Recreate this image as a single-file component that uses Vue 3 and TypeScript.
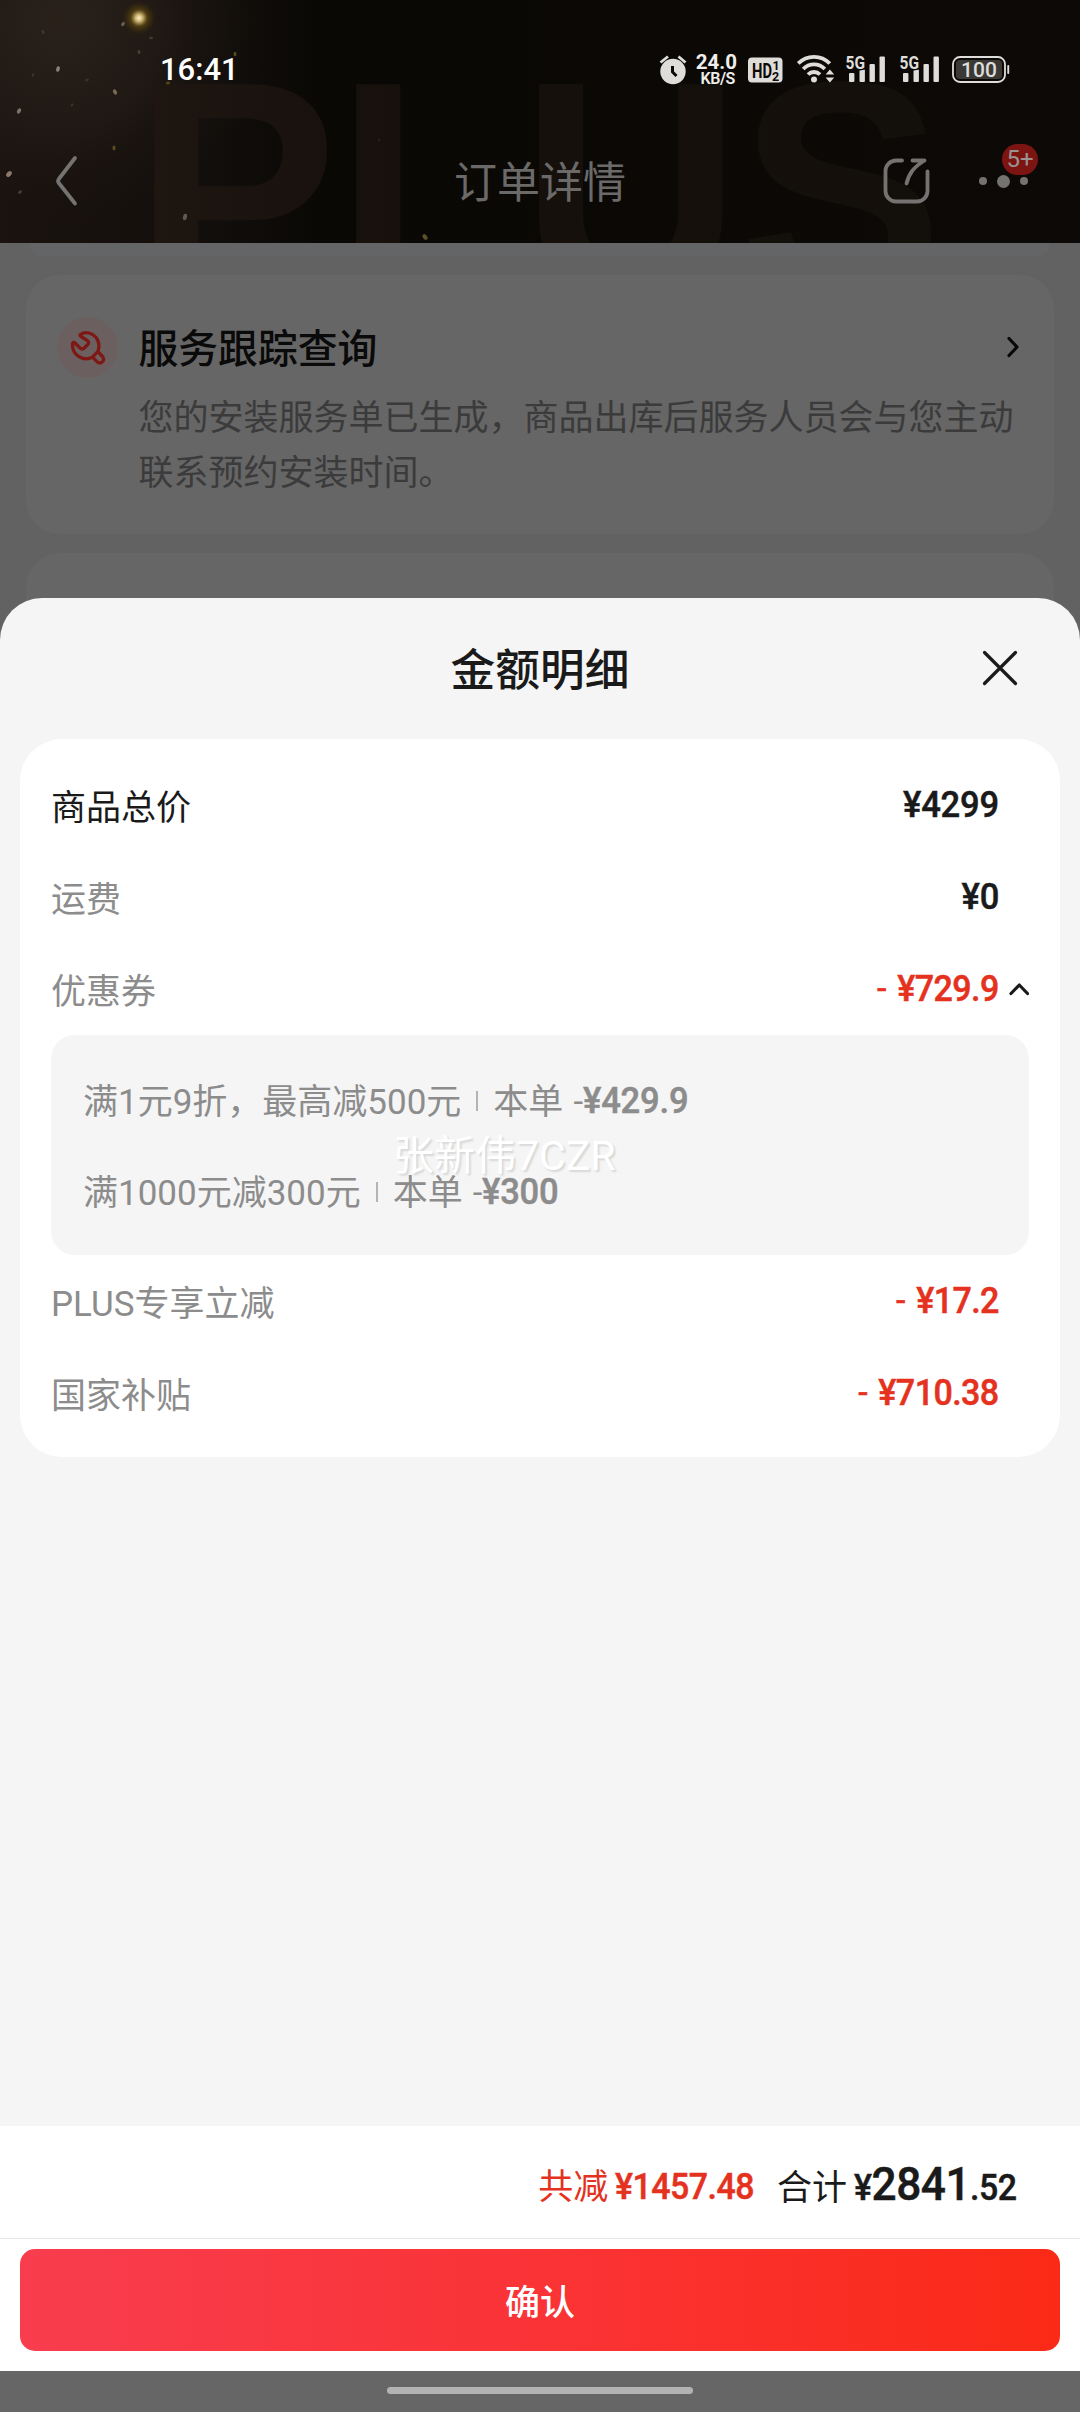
<script setup lang="ts">
interface Coupon {
  rule: string
  amount: string
}
interface Speck {
  x: number
  y: number
  r: number
  c: string
  a: number
}

const coupons: Coupon[] = [
  { rule: '满1元9折，最高减500元', amount: '¥429.9' },
  { rule: '满1000元减300元', amount: '¥300' },
]

const discounts = [
  { label: 'PLUS专享立减', amount: '¥17.2' },
  { label: '国家补贴', amount: '¥710.38' },
]

const specks: Speck[] = [
  { x: 123, y: 24, r: 2.4, c: '#6a5f58', a: 30 },
  { x: 43, y: 32, r: 2, c: '#40382f', a: -30 },
  { x: 139, y: 52, r: 2, c: '#4a4234', a: -20 },
  { x: 58, y: 69, r: 2.8, c: '#8a8078', a: 15 },
  { x: 87, y: 80, r: 2, c: '#3c3029', a: 70 },
  { x: 19, y: 111, r: 2.8, c: '#7c746c', a: 30 },
  { x: 115, y: 92, r: 2.8, c: '#7a6a58', a: -30 },
  { x: 33, y: 75, r: 1.8, c: '#40352e', a: 0 },
  { x: 72, y: 105, r: 1.8, c: '#3c3028', a: 40 },
  { x: 114, y: 148, r: 2.4, c: '#5a4c20', a: 0 },
  { x: 9, y: 174, r: 3.4, c: '#8c7a68', a: 40 },
  { x: 20, y: 192, r: 2.2, c: '#4a3a34', a: 60 },
  { x: 185, y: 217, r: 3.2, c: '#625850', a: 10 },
  { x: 235, y: 54, r: 2.2, c: '#5a4a1c', a: 0 },
  { x: 168, y: 83, r: 2.2, c: '#54421c', a: 80 },
  { x: 425, y: 237, r: 3.2, c: '#5c5028', a: -35 },
  { x: 379, y: 140, r: 1.6, c: '#2c2418', a: 0 },
  { x: 151, y: 38, r: 2, c: '#403a2c', a: -80 },
]
const bars = [
  { x: 3, y: 17, h: 9 },
  { x: 13.5, y: 13.5, h: 12.5 },
  { x: 23.5, y: 8, h: 18 },
  { x: 33.5, y: 0.5, h: 25.5 },
]
</script>

<template>
  <main class="screen">
    <header class="top">
      <svg class="sky" width="1080" height="243" viewBox="0 0 1080 243">
        <defs>
          <linearGradient id="base" x1="0" x2="1" y1="0" y2="0">
            <stop offset="0" stop-color="#1a130f" />
            <stop offset="0.2" stop-color="#110e0b" />
            <stop offset="0.3" stop-color="#0a0805" />
            <stop offset="1" stop-color="#0c0906" />
          </linearGradient>
          <radialGradient id="warm" gradientUnits="userSpaceOnUse" cx="60" cy="20" r="210">
            <stop offset="0" stop-color="#2a211b" />
            <stop offset="0.45" stop-color="#231b16" stop-opacity="0.85" />
            <stop offset="1" stop-color="#1a130f" stop-opacity="0" />
          </radialGradient>
          <radialGradient id="star">
            <stop offset="0" stop-color="#fff3c8" />
            <stop offset="0.22" stop-color="#c9b070" />
            <stop offset="0.5" stop-color="#5a4610" stop-opacity="0.75" />
            <stop offset="1" stop-color="#3a2c08" stop-opacity="0" />
          </radialGradient>
          <linearGradient id="word" gradientUnits="userSpaceOnUse" x1="150" x2="940" y1="0" y2="0">
            <stop offset="0" stop-color="#1f1611" />
            <stop offset="0.22" stop-color="#18110d" />
            <stop offset="0.5" stop-color="#15100b" />
            <stop offset="1" stop-color="#130f0a" />
          </linearGradient>
        </defs>
        <rect width="1080" height="243" fill="url(#base)" />
        <rect width="400" height="243" fill="url(#warm)" />
        <text class="word" x="134" y="294" fill="url(#word)">PLUS</text>
        <circle cx="139" cy="18" r="17" fill="url(#star)" />
        <ellipse
          v-for="(s, i) in specks"
          :key="i"
          :cx="s.x"
          :cy="s.y"
          :rx="s.r * 0.65"
          :ry="s.r"
          :fill="s.c"
          :transform="`rotate(${s.a} ${s.x} ${s.y})`"
        />
      </svg>

      <div class="status">
        <span class="clock">16:41</span>
        <div class="tray">
          <svg class="alarm" width="30" height="32" viewBox="0 0 30 32">
            <circle cx="14" cy="17.5" r="12.7" fill="#deddd9" />
            <path d="M1.5 8.5 9 2.5M26.5 8.5 19.5 2.5" stroke="#deddd9" stroke-width="2.8" fill="none" />
            <path d="M13.5 12V18L17.5 22" stroke="#0c0906" stroke-width="3" fill="none" />
          </svg>
          <div class="speed"><b>24.0</b><i>KB/S</i></div>
          <svg class="hd" width="35" height="26" viewBox="0 0 35 26">
            <rect y="0.5" width="34.5" height="25" rx="4" fill="#deddd9" />
            <text class="hd-t" x="4" y="20.5" textLength="20" lengthAdjust="spacingAndGlyphs">HD</text>
            <text class="hd-n" x="24.5" y="12.5">1</text>
            <text class="hd-n" x="24" y="23.5">2</text>
          </svg>
          <svg class="wifi" width="38" height="32" viewBox="0 0 38 32">
            <g fill="none" stroke="#deddd9" stroke-width="3.8">
              <path d="M1.2 11.5A22 22 0 0 1 32.8 11.5" />
              <path d="M6.2 17A15 15 0 0 1 27.8 17" />
              <path d="M11 22.5A8.5 8.5 0 0 1 23 22.5" />
            </g>
            <circle cx="17" cy="27.5" r="3" fill="#deddd9" />
            <path d="M28.6 22.5h8.6L32.9 17.5zM28.6 25.5h8.6L32.9 30.5z" fill="#deddd9" />
          </svg>
          <svg v-for="n in 2" :key="n" class="signal" width="40" height="28" viewBox="0 0 40 28">
            <rect v-for="b in bars" :key="b.x" :x="b.x" :y="b.y + 1" width="5.4" :height="b.h" rx="1" fill="#deddd9" />
            <text class="g5" x="-0.5" y="13.5" textLength="19.5" lengthAdjust="spacingAndGlyphs">5G</text>
          </svg>
          <svg class="battery" width="58" height="28" viewBox="0 0 58 28">
            <rect x="1" y="1" width="52" height="25" rx="7" fill="none" stroke="#deddd9" stroke-width="1.8" />
            <rect x="4" y="4" width="46" height="19" rx="4" fill="#3a3936" />
            <rect x="55.3" y="9" width="1.9" height="9" rx="0.9" fill="#deddd9" />
            <text class="bat-t" x="27" y="20.8" text-anchor="middle">100</text>
          </svg>
        </div>
      </div>

      <div class="nav">
        <svg class="back" width="28" height="56" viewBox="0 0 28 56">
          <path d="M21 5 4.8 26Q3.4 28 4.8 30L21 50.5" />
        </svg>
        <h1>订单详情</h1>
        <div class="actions">
          <svg class="share" width="48" height="48" viewBox="0 0 48 48">
            <path d="M19 3.5H13A10.5 10.5 0 0 0 2.5 14V34A10.5 10.5 0 0 0 13 44.5H34A10.5 10.5 0 0 0 44.5 34V14.5" />
            <path d="M29.5 3.5H41.5C31 10 26 16 23.5 26.5" />
          </svg>
          <div class="more">
            <i></i><i class="mid"></i><i></i>
            <span class="badge">5+</span>
          </div>
        </div>
      </div>
    </header>

    <section class="under">
      <div class="stub"></div>
      <div class="card">
        <div class="disc">
          <svg width="36" height="36" viewBox="0 0 36 36">
            <path d="M10.5 4.5C13 2.5 16 2.2 19 3C27 5.2 31 13.5 27.800 21.5L32.5 26.5C35.5 30.5 31 35 27 31.7L22.5 27.2C12.5 32 2 25 2.500 13.500Q3 11.500 5 13L10 18Q12 19.800 14 18.200L17.800 14.500Q19.300 12.500 17.800 10.800L11 6.500Q9.500 5.500 10.500 4.500ZM27.800 21.500 22.500 27.200" />
          </svg>
        </div>
        <div class="info">
          <div class="info-head">
            <h2>服务跟踪查询</h2>
            <svg width="14" height="24" viewBox="0 0 14 24"><path d="M3 3.5 11 12 3 20.5" /></svg>
          </div>
          <p>您的安装服务单已生成，商品出库后服务人员会与您主动联系预约安装时间。</p>
        </div>
      </div>
      <div class="card next"></div>
    </section>

    <section class="sheet">
      <div class="sheet-head">
        <h2>金额明细</h2>
        <svg class="close" width="36" height="36" viewBox="0 0 36 36"><path d="M2.5 2.5 33.5 33.5M33.5 2.5 2.5 33.5" /></svg>
      </div>

      <div class="panel">
        <div class="row dark">
          <span>商品总价</span>
          <b class="num">¥4299</b>
        </div>
        <div class="row">
          <span>运费</span>
          <b class="num">¥0</b>
        </div>
        <div class="row">
          <span>优惠券</span>
          <b class="num red"><em>-</em>¥729.9</b>
          <svg class="caret" width="22" height="14" viewBox="0 0 22 14"><path d="M4 11.5 12.3 3 20.5 11.5" /></svg>
        </div>
        <div class="coupons">
          <div v-for="c in coupons" :key="c.rule" class="coupon">
            <span class="txt">{{ c.rule }}</span>
            <i></i>
            <span class="txt">本单</span>
            <span class="cut">-<b class="num">{{ c.amount }}</b></span>
          </div>
          <div class="mark">张新伟7CZR</div>
        </div>
        <div v-for="d in discounts" :key="d.label" class="row">
          <span>{{ d.label }}</span>
          <b class="num red"><em>-</em>{{ d.amount }}</b>
        </div>
      </div>

      <div class="total">
        <span class="save">共减<b class="num">¥1457.48</b></span>
        <span class="sum">合计<b class="num">¥<strong>2841</strong>.52</b></span>
      </div>
      <div class="confirm">
        <button type="button">确认</button>
      </div>
    </section>

    <footer class="gesture"><i></i></footer>
  </main>
</template>

<style>
body {
  margin: 0;
  background: #666;
}
</style>

<style scoped>
* {
  box-sizing: border-box;
}
.screen {
  width: 1080px;
  height: 2412px;
  display: flex;
  flex-direction: column;
  overflow: hidden;
  background: #626262;
  font-family: Roboto, 'Noto Sans CJK SC', sans-serif;
}
h1,
h2,
p {
  margin: 0;
}
svg {
  display: block;
  flex: none;
}
i,
em {
  font-style: normal;
}

.top {
  position: relative;
  height: 243px;
  flex: none;
  overflow: hidden;
}
.sky {
  position: absolute;
  inset: 0;
}
.word {
  font: bold 305px 'Liberation Sans', sans-serif;
  letter-spacing: -1.5px;
}
.status {
  position: relative;
  height: 140px;
  padding: 0 70px 0 160px;
  display: flex;
  align-items: center;
  justify-content: space-between;
}
.clock {
  color: #fff;
  font-size: 31px;
  font-weight: 500;
  line-height: 36px;
}
.tray {
  display: flex;
  align-items: center;
}
.speed {
  width: 42px;
  margin-left: 6px;
  display: flex;
  flex-direction: column;
  align-items: flex-end;
  color: #efeeea;
}
.speed b {
  font: bold 20.5px/17px Roboto, sans-serif;
}
.speed i {
  font: 600 16px/15px Roboto, sans-serif;
  padding-right: 2px;
  letter-spacing: -0.4px;
}
.hd {
  margin-left: 11px;
}
.hd-t {
  font: bold 21px Roboto, sans-serif;
  fill: #0c0906;
}
.hd-n {
  font: bold 12.5px Roboto, sans-serif;
  fill: #0c0906;
}
.wifi {
  margin: -4px 0 0 14px;
}
.signal {
  margin: -2px 0 0 11px;
  overflow: visible;
}
.signal + .signal {
  margin-left: 14px;
}
.g5 {
  font: bold 18.5px Roboto, sans-serif;
  fill: #deddd9;
  stroke: #0c0906;
  stroke-width: 3px;
  paint-order: stroke;
}
.battery {
  margin-left: 12px;
}
.bat-t {
  font: 500 21px Roboto, sans-serif;
  fill: #deddd9;
}

.nav {
  position: relative;
  height: 82px;
  padding: 0 40px;
  display: grid;
  grid-template-columns: 1fr auto 1fr;
  align-items: center;
}
.back {
  margin-left: 14px;
}
.back path,
.share path {
  fill: none;
  stroke: #747372;
  stroke-width: 3.8;
  stroke-linecap: round;
  stroke-linejoin: round;
}
.nav h1 {
  padding-top: 4px;
  color: #6b6a69;
  font-size: 43px;
  font-weight: 400;
  line-height: 60px;
}
.actions {
  display: flex;
  align-items: center;
  justify-content: flex-end;
  gap: 48px;
}
.more {
  position: relative;
  display: flex;
  align-items: center;
  gap: 10px;
  margin-right: 12px;
}
.more i {
  width: 8px;
  height: 8px;
  border-radius: 50%;
  background: #747372;
}
.more .mid {
  width: 13px;
  height: 13px;
}
.badge {
  position: absolute;
  left: 23px;
  top: -31px;
  width: 36px;
  height: 31px;
  border-radius: 16px;
  background: #7c1512;
  color: #9c9291;
  font-size: 24px;
  line-height: 31px;
  text-align: center;
}

.under {
  height: 398px;
  flex: none;
  padding: 0 26px;
}
.stub {
  height: 13px;
  background: #646567;
  border-radius: 0 0 28px 28px;
  margin: 0 4px 19px;
}
.card {
  height: 259px;
  border-radius: 34px;
  background: #666;
  padding: 37px 28px 0 31px;
  display: flex;
}
.next {
  margin-top: 19px;
  height: 110px;
}
.disc {
  width: 61px;
  height: 61px;
  margin-top: 5px;
  border-radius: 50%;
  background: #6b605f;
  display: flex;
  align-items: center;
  justify-content: center;
}
.disc path {
  fill: none;
  stroke: #7d1814;
  stroke-width: 3.3;
  stroke-linejoin: round;
}
.info {
  flex: 1;
  padding-left: 20.5px;
}
.info-head {
  display: flex;
  align-items: center;
  justify-content: space-between;
  height: 70px;
  padding-right: 6px;
}
.info-head h2 {
  padding-top: 6px;
  font-size: 39.8px;
  font-weight: 500;
  line-height: 60px;
  color: #0a0a0a;
}
.info-head path {
  fill: none;
  stroke: #080808;
  stroke-width: 3.2;
  stroke-linecap: round;
  stroke-linejoin: round;
}
.info p {
  width: 880px;
  padding-top: 10px;
  font-size: 35px;
  line-height: 54.5px;
  color: #3b3b3b;
}

.sheet {
  position: relative;
  margin-top: -43px;
  height: 1773px;
  flex: none;
  display: flex;
  flex-direction: column;
  border-radius: 42px 42px 0 0;
  background: #f5f5f5;
  overflow: hidden;
}
.sheet-head {
  height: 141px;
  flex: none;
  display: grid;
  grid-template-columns: 1fr auto 1fr;
  align-items: center;
  padding: 0 62px 2px;
}
.sheet-head h2 {
  grid-column: 2;
  padding-top: 7px;
  font-size: 44.7px;
  font-weight: 500;
  line-height: 66px;
  color: #1a1a1a;
}
.close {
  justify-self: end;
}
.close path,
.caret path {
  fill: none;
  stroke: #1a1a1a;
  stroke-width: 3.2;
  stroke-linecap: round;
  stroke-linejoin: round;
}
.panel {
  margin: 0 20px;
  padding: 20px 31px 18px;
  border-radius: 42px;
  background: #fff;
}
.row {
  height: 92px;
  display: flex;
  align-items: center;
  font-size: 35px;
  color: #8c8c8c;
}
.row > span {
  padding-bottom: 2px;
}
.txt {
  padding-bottom: 4px;
}
.row.dark {
  color: #1a1a1a;
}
.num {
  display: inline-block;
  font-size: 36px;
  font-weight: 500;
  letter-spacing: -0.2px;
  -webkit-text-stroke: 0.5px currentColor;
  transform: scaleX(0.96);
  transform-origin: 0 50%;
}
.row .num {
  margin-left: auto;
  margin-right: 30px;
  color: #1a1a1a;
  transform-origin: 100% 50%;
}
.row .red {
  color: #e4321f;
  letter-spacing: -0.6px;
  transform: scaleX(0.945);
}
.red em {
  font-weight: 400;
  margin-right: 12px;
}
.caret {
  margin-left: -22px;
}
.coupons {
  position: relative;
  height: 220px;
  padding: 20px 32px;
  border-radius: 24px;
  background: #f5f5f5;
  color: #8c8c8c;
  font-size: 35px;
}
.coupon {
  height: 91px;
  display: flex;
  align-items: center;
}
.coupon i {
  width: 2px;
  height: 20px;
  margin: 0 15px;
  background: #b4b4b4;
}
.cut {
  margin-left: 10px;
}
.mark {
  position: absolute;
  left: 342px;
  top: 91px;
  color: #fff;
  font-size: 41px;
  line-height: 60px;
  text-shadow: 2px 2px 2px rgba(0, 0, 0, 0.12);
}

.total {
  margin-top: auto;
  height: 113px;
  flex: none;
  padding: 3px 63px 0 0;
  display: flex;
  align-items: center;
  justify-content: flex-end;
  gap: 23px;
  background: #fff;
  border-bottom: 1px solid #e6e6e6;
  font-size: 35px;
  color: #1a1a1a;
}
.total span {
  display: flex;
  align-items: baseline;
}
.save {
  color: #e4321f;
}
.total .num {
  margin-left: 7px;
  letter-spacing: -0.5px;
  transform: scaleX(0.94);
}
/* The squeezed amounts give their freed width back to the line. */
.save .num {
  margin-right: -9px;
}
.sum .num {
  margin-right: -10px;
}
.total strong {
  font-size: 47px;
  font-weight: 500;
}
.confirm {
  height: 132px;
  flex: none;
  padding: 10px 20px 20px;
  background: #fff;
}
.confirm button {
  width: 100%;
  height: 102px;
  padding: 0 0 2px;
  border: 0;
  border-radius: 15px;
  background: linear-gradient(90deg, #f83d4e, #fa3336 50%, #fb2a17);
  color: #fff;
  font-family: inherit;
  font-size: 35px;
  font-weight: 500;
}
.gesture {
  flex: 1;
  background: #666;
  display: flex;
  justify-content: center;
  padding-top: 16px;
}
.gesture i {
  width: 306px;
  height: 7px;
  border-radius: 4px;
  background: #b3b3b3;
}
</style>
